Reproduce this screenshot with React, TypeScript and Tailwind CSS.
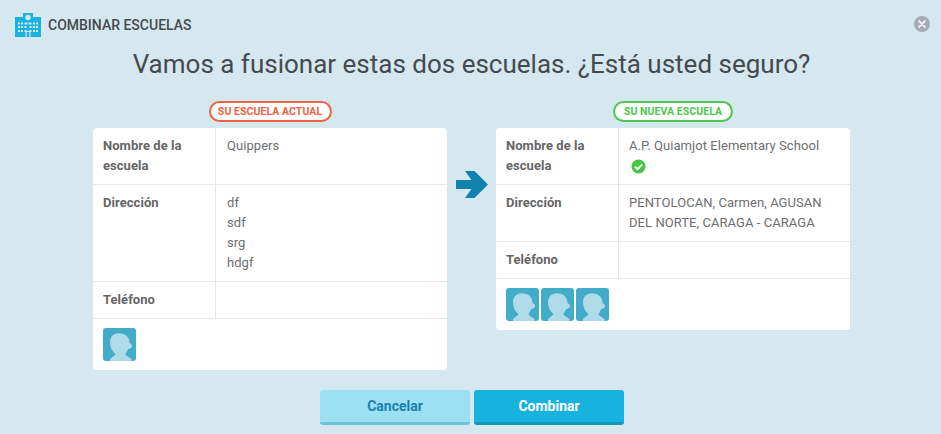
import React from 'react';

const Avatar = () => (
  <div className="w-[33px] h-[33px] rounded-[3px] bg-[#43acc8] overflow-hidden">
    <svg viewBox="0 0 33 33" width="33" height="33">
      <path
        d="M15.500 5.300C10.500 5.300 7 9 7 14.500c0 4.500 2 8.500 4.500 10.500 1.200 1 1 2-.5 2.700L7 31v2h21.500v-2l-4.500-3c-1.500-1-1.800-2-1-3 1-1 1.500-2.500 2.300-4 2.200 0 3.700-1.500 3.700-3.200 0-1.500-1.500-2.300-2.500-2.800 0-6-4-9.700-11-9.700z"
        fill="#aedbe7"
      />
    </svg>
  </div>
);

const Row = ({ label, children, wide }: { label: string; children?: React.ReactNode; wide?: boolean }) => (
  <div className="flex border-b border-[#e6e6e6]">
    <div className="w-[123px] shrink-0 border-r border-[#e6e6e6] pl-[10px] pr-2 py-2 font-bold text-[#666666] tracking-[0.05px]">{label}</div>
    <div className={(wide ? 'pl-[11px]' : 'pl-[10px]') + ' flex-1 pr-2 py-2 text-[#6e6e6e] tracking-[0.06px]'}>{children}</div>
  </div>
);

const SchoolIcon = () => (
  <svg width="26" height="24" viewBox="0 0 26 24">
    <path d="M8 0h10v4h8v20H0V4h8z" fill="#1ab3de" />
    <circle cx="13" cy="4.500" r="2.700" fill="#d5e8f0" />
    <g fill="#d5e8f0">
      {[3, 6, 9.500, 14.500, 18, 21].map((x) => [9.500, 13, 17].map((y) => (
        <rect key={x + '-' + y} x={x} y={y} width="2" height="2" />
      )))}
      <rect x="11" y="9.500" width="1.500" height="2" />
      <rect x="13.500" y="9.500" width="1.500" height="2" />
      <rect x="10.500" y="18" width="5" height="6" />
    </g>
    <rect x="11.700" y="19" width="2.600" height="5" fill="#1ab3de" />
  </svg>
);

export default function App() {
  return (
    <div className="relative w-[941px] h-[434px] overflow-hidden bg-[#d5e8f0] font-['Roboto',sans-serif] text-[13px] leading-[20px]">
      {/* Cabecera */}
      <div className="flex items-center gap-[7px] pl-[15px] pt-[13px] h-[37px]">
        <SchoolIcon />
        <span className="text-[14px] font-medium text-[#454a4e]">COMBINAR ESCUELAS</span>
      </div>
      <button className="absolute top-[16px] left-[914px] w-[16px] h-[16px] rounded-full bg-[#a3adb3] flex items-center justify-center">
        <svg width="8" height="8" viewBox="0 0 8 8">
          <path d="M1 1l6 6M7 1L1 7" stroke="#e6eff3" strokeWidth="1.800" strokeLinecap="round" />
        </svg>
      </button>

      <h1 className="mt-[10px] pl-[2px] text-center text-[26px] leading-[34px] font-normal text-[#454a4e]">
        Vamos a fusionar estas dos escuelas. ¿Está usted seguro?
      </h1>

      {/* Tarjetas */}
      <div className="flex items-start pl-[93px] mt-[20px]">
        <div className="w-[354px]">
          <div className="flex justify-center h-[27px]">
            <span className="h-[21px] w-[123px] rounded-full border-2 border-[#ee6344] bg-white text-[#ee6344] text-[10.5px] leading-[17px] font-bold tracking-[0.06px] text-center">
              SU ESCUELA ACTUAL
            </span>
          </div>
          <div className="bg-white rounded-[4px] overflow-hidden">
            <Row wide label="Nombre de la escuela">Quippers</Row>
            <Row wide label="Dirección">
              df<br />sdf<br />srg<br />hdgf
            </Row>
            <Row wide label="Teléfono"><div className="h-5" /></Row>
            <div className="flex gap-[2px] pl-[10px] pt-[9px] pb-[9px]">
              <Avatar />
            </div>
          </div>
        </div>

        <div className="w-[49px] pt-[70px] pl-[9px]">
          <svg width="32" height="27" viewBox="0 0 32 27">
            <path d="M0 9h15.500L9 0h9.500L32 13.500 18.500 27H9l6.500-9H0z" fill="#0f82ad" />
          </svg>
        </div>

        <div className="w-[354px]">
          <div className="flex justify-center h-[27px]">
            <span className="h-[21px] w-[120px] rounded-full border-2 border-[#4cc94c] bg-white text-[#4cc94c] text-[10.5px] leading-[17px] font-bold tracking-[0.06px] text-center">
              SU NUEVA ESCUELA
            </span>
          </div>
          <div className="bg-white rounded-[4px] overflow-hidden">
            <Row label="Nombre de la escuela">
              A.P. Quiamjot Elementary School
              <svg className="block mt-[3px] ml-[2px]" width="15" height="15" viewBox="0 0 15 15">
                <circle cx="7.500" cy="7.500" r="7" fill="#46c646" />
                <path d="M4 7.700l2.500 2.500L11 5.600" fill="none" stroke="#fff" strokeWidth="2" />
              </svg>
            </Row>
            <Row label="Dirección">PENTOLOCAN, Carmen, AGUSAN DEL NORTE, CARAGA - CARAGA</Row>
            <Row label="Teléfono"><div className="h-5" /></Row>
            <div className="flex gap-[2px] pl-[10px] pt-[9px] pb-[9px]">
              <Avatar />
              <Avatar />
              <Avatar />
            </div>
          </div>
        </div>
      </div>

      {/* Botones */}
      <div className="absolute left-0 right-0 top-[390px] flex justify-center gap-[4px] pl-[3px]">
        <button className="w-[150px] h-[35px] rounded-[3px] bg-[#9ce1f3] border-b-[3px] border-[#6dc4d6] text-[#1a7fae] text-[14px] font-bold">
          Cancelar
        </button>
        <button className="w-[150px] h-[35px] rounded-[3px] bg-[#17b3de] border-b-[3px] border-[#1296ba] text-white text-[14px] font-bold">
          Combinar
        </button>
      </div>
    </div>
  );
}
